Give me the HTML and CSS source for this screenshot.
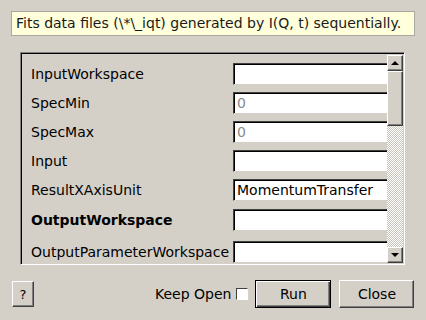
FILE: index.html
```html
<!DOCTYPE html>
<html lang="en">
<head>
    <meta charset="UTF-8">
    <title>PlotPeakByLogValue</title>
    <link rel="stylesheet" href="styles.css">
</head>
<body>
    <div class="dialog">
        <!-- description -->
        <div class="tip">Fits data files (\*\_iqt) generated by I(Q, t) sequentially.</div>

        <!-- property list -->
        <div class="frame">
            <div class="viewport">
                <div class="props">
                    <label>InputWorkspace</label>
                    <div class="field"></div>

                    <label>SpecMin</label>
                    <div class="field disabled">0</div>

                    <label>SpecMax</label>
                    <div class="field disabled">0</div>

                    <label>Input</label>
                    <div class="field"></div>

                    <label>ResultXAxisUnit</label>
                    <div class="field">MomentumTransfer</div>

                    <label class="bold wide">OutputWorkspace</label>
                    <div class="field wide"></div>

                    <label class="last">OutputParameterWorkspace</label>
                    <div class="field last"></div>
                </div>
            </div>
            <div class="scrollbar">
                <div class="sb-btn"><span class="arrow up"></span></div>
                <div class="sb-thumb"></div>
                <div class="sb-track"></div>
                <div class="sb-btn"><span class="arrow down"></span></div>
            </div>
        </div>

        <!-- buttons -->
        <div class="footer">
            <button class="btn help">?</button>
            <span class="keep">Keep Open</span>
            <span class="check"></span>
            <button class="btn run">Run</button>
            <button class="btn close">Close</button>
        </div>
    </div>
</body>
</html>
```

FILE: styles.css
```css
* {
    margin: 0;
    padding: 0;
    box-sizing: border-box;
}

body {
    font-family: 'DejaVu Sans', sans-serif;
    font-size: 14px;
    color: #000;
    background-color: #d4d0c8;
    width: 426px;
    height: 320px;
    overflow: hidden;
}

.tip {
    margin: 11px 11px 0 11px;
    width: 404px;
    height: 25px;
    padding-left: 4px;
    line-height: 23px;
    background: #ffffdc;
    border: 1px solid #a8a8a0;
    color: #1a1a1a;
    white-space: nowrap;
}

/* sunken frame around the list */
.frame {
    margin: 16px 0 0 20px;
    width: 385px;
    height: 213px;
    display: flex;
    border: 1px solid;
    border-color: #808080 #fff #fff #808080;
    box-shadow: inset 1px 1px 0 #000, inset -1px -1px 0 #d4d0c8;
    padding: 2px 1px 1px 2px;
}

.viewport {
    width: 365px;
    height: 100%;
    overflow: hidden;
}

.props {
    display: grid;
    grid-template-columns: 202px 1fr;
    grid-auto-rows: 22px;
    row-gap: 7px;
    padding: 8px 0 0 8px;
    align-items: center;
}

.props .wide {
    margin-top: 2px;
}

.props .last {
    margin-top: 7px;
}

.bold {
    font-weight: bold;
}

.field {
    height: 22px;
    margin-right: -6px;
    background: #fff;
    border: 1px solid;
    border-color: #404040 #d4d0c8 #d4d0c8 #404040;
    box-shadow: inset 1px 1px 0 #000;
    padding: 0 0 0 3px;
    line-height: 21px;
    white-space: nowrap;
}

.field.disabled {
    color: #8a8a8a;
}

/* vertical scrollbar */
.scrollbar {
    width: 16px;
    height: 100%;
    display: flex;
    flex-direction: column;
}

.sb-btn, .sb-thumb {
    background: #d4d0c8;
    border: 1px solid;
    border-color: #fff #404040 #404040 #fff;
    box-shadow: inset -1px -1px 0 #808080;
}

.sb-btn {
    height: 16px;
    display: flex;
    align-items: center;
    justify-content: center;
}

.sb-thumb {
    height: 55px;
}

.sb-track {
    flex: 1;
    background: repeating-conic-gradient(#fff 0 25%, #c8c4bc 0 50%) 0 0 / 2px 2px;
}

.arrow {
    width: 0;
    height: 0;
    border-left: 4px solid transparent;
    border-right: 4px solid transparent;
}

.arrow.up {
    border-bottom: 4px solid #000;
}

.arrow.down {
    border-top: 4px solid #000;
}

/* bottom row */
.footer {
    display: flex;
    align-items: center;
    margin: 15px 0 0 12px;
    height: 28px;
}

.btn {
    font-family: 'DejaVu Sans', sans-serif;
    font-size: 14px;
    color: #000;
    background: #d4d0c8;
    border: 1px solid;
    border-color: #fff #404040 #404040 #fff;
    box-shadow: inset -1px -1px 0 #808080;
    height: 28px;
    flex-shrink: 0;
}

.help {
    width: 22px;
    height: 26px;
    font-size: 13px;
}

.keep {
    margin-left: 121px;
    white-space: nowrap;
    flex-shrink: 0;
}

.check {
    width: 12px;
    height: 12px;
    margin-left: 5px;
    flex-shrink: 0;
    background: #fff;
    border: 1px solid;
    border-color: #404040 #fff #fff #404040;
}

.run {
    width: 76px;
    margin-left: 7px;
    border: 1px solid #000;
    box-shadow: inset 1px 1px 0 #fff, inset -1px -1px 0 #404040, inset -2px -2px 0 #808080;
}

.close {
    width: 75px;
    margin-left: 8px;
}
```
